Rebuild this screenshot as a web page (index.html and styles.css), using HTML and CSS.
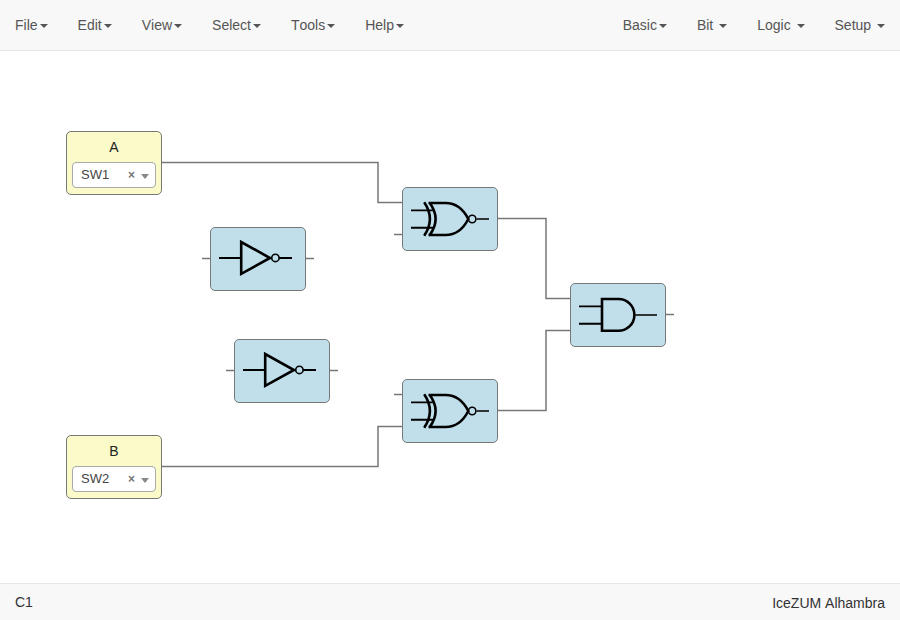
FILE: index.html
```html
<!DOCTYPE html>
<html lang="en">
<head>
<meta charset="utf-8">
<title>C1</title>
<link rel="stylesheet" href="styles.css">
</head>
<body>
<nav class="navbar">
  <ul class="menu">
    <li>File<b class="caret"></b></li>
    <li>Edit<b class="caret"></b></li>
    <li>View<b class="caret"></b></li>
    <li>Select<b class="caret"></b></li>
    <li>Tools<b class="caret"></b></li>
    <li>Help<b class="caret"></b></li>
  </ul>
  <ul class="menu">
    <li>Basic<b class="caret"></b></li>
    <li>Bit <b class="caret"></b></li>
    <li>Logic <b class="caret"></b></li>
    <li>Setup <b class="caret"></b></li>
  </ul>
</nav>

<main class="paper">
  <svg class="wires" viewBox="0 51 900 532">
    <path d="M162 162.5H378V202.5H402"/>
    <path d="M162 466.5H378V426.5H402"/>
    <path d="M498 218.5H546V298.5H570"/>
    <path d="M498 410.5H546V330.5H570"/>
    <path d="M394 234.5H402M394 394.5H402M202 258.5H210M306 258.5H314M226 370.5H234M330 370.5H338M666 314.5H674"/>
  </svg>

  <section class="block io input-a">
    <div class="name">A</div>
    <div class="select"><span class="value">SW1</span><span class="clear">×</span><span class="arrow"></span></div>
  </section>
  <section class="block io input-b">
    <div class="name">B</div>
    <div class="select"><span class="value">SW2</span><span class="clear">×</span><span class="arrow"></span></div>
  </section>

  <svg class="defs">
    <symbol id="xnor" viewBox="0 0 96 64">
      <path class="pin" d="M9 23.4H31M9 40.7H31"/>
      <path class="body" d="M22.2 15.3Q33.6 32 22.2 48.7"/>
      <path class="body" d="M26.5 16H43.5C54 16 61.5 22.5 66.3 32C61.5 41.5 54 48 43.5 48H26.5M27.6 15.8Q39.6 32 27.6 48.2"/>
      <circle class="bubble" cx="70.2" cy="32" r="3.7"/>
      <path class="out" d="M74.5 32H87"/>
    </symbol>
    <symbol id="not" viewBox="0 0 96 64">
      <path class="pin" d="M9 31H31M69 31H82"/>
      <path class="body" d="M31.2 15V46.8L60 31Z"/>
      <circle class="bubble" cx="65.4" cy="30.9" r="3.7"/>
    </symbol>
    <symbol id="and" viewBox="0 0 96 64">
      <path class="pin" d="M9 23.4H31M9 40.7H31"/>
      <path class="body" d="M32 16H48.5A15.9 15.9 0 0 1 48.5 47.8H32Z"/>
      <path class="out" d="M65 32H87"/>
    </symbol>
  </svg>

  <section class="block gate xnor-top"><svg><use href="#xnor"/></svg></section>
  <section class="block gate xnor-bottom"><svg><use href="#xnor"/></svg></section>
  <section class="block gate not-top"><svg><use href="#not"/></svg></section>
  <section class="block gate not-bottom"><svg><use href="#not"/></svg></section>
  <section class="block gate and-out"><svg><use href="#and"/></svg></section>
</main>

<footer class="statusbar">
  <span class="project">C1</span>
  <span class="board">IceZUM Alhambra</span>
</footer>
</body>
</html>
```
FILE: styles.css
```css
* { box-sizing: border-box; }

body {
  margin: 0;
  height: 620px;
  display: flex;
  flex-direction: column;
  overflow: hidden;
  background: #fff;
  color: #333;
  font: 14px/20px "Liberation Sans", Arial, sans-serif;
  font-kerning: none;
}

.navbar {
  height: 51px;
  flex: none;
  display: flex;
  justify-content: space-between;
  background: #f8f8f8;
  border-bottom: 1px solid #e7e7e7;
}

.menu {
  display: flex;
  margin: 0;
  padding: 0;
  list-style: none;
  color: #555;
}

.menu li { padding: 15px; white-space: pre; }

.caret {
  display: inline-block;
  margin-left: 2px;
  vertical-align: middle;
  border-top: 4px solid;
  border-right: 4px solid transparent;
  border-left: 4px solid transparent;
}

.paper { position: relative; flex: 1; }

.wires { display: block; width: 900px; height: 532px; }
.wires path { fill: none; stroke: #777; stroke-width: 1.5; }

.defs { position: absolute; width: 0; height: 0; }

/* Block positions on the design canvas */
.block {
  position: absolute;
  width: 96px;
  height: 64px;
  border: 1px solid #777;
  border-radius: 5px;
}
.input-a { left: 66px; top: 80px; }
.input-b { left: 66px; top: 384px; }
.xnor-top { left: 402px; top: 136px; }
.xnor-bottom { left: 402px; top: 328px; }
.not-top { left: 210px; top: 176px; }
.not-bottom { left: 234px; top: 288px; }
.and-out { left: 570px; top: 232px; }

.gate { background: #c0dfeb; }
.gate svg { display: block; width: 96px; height: 64px; margin: -1px; }
.body, .pin, .bubble, .out { fill: none; stroke: #000; }
.body { stroke-width: 2.6; }
.pin { stroke-width: 1.9; }
.bubble { stroke-width: 1.6; }
.out { stroke: #222; stroke-width: 1.8; }

.io { background: #fbfac9; padding: 5px; }
.name { height: 25px; line-height: 20px; text-align: center; color: #222; }

.select {
  height: 26px;
  display: flex;
  align-items: center;
  padding: 0 6px 0 8px;
  border: 1px solid #aaa;
  border-radius: 4px;
  background: #fff;
  color: #444;
  font-size: 13px;
  line-height: 24px;
}
.value { flex: 1; }
.clear { font-size: 12px; font-weight: bold; color: #777; margin-right: 6px; }
.arrow {
  margin-top: 3px;
  border-top: 5px solid #888;
  border-left: 4px solid transparent;
  border-right: 4px solid transparent;
}

.statusbar {
  height: 37px;
  flex: none;
  display: flex;
  justify-content: space-between;
  padding: 8px 15px;
  background: #f8f8f8;
  border-top: 1px solid #e7e7e7;
}
.board { padding-top: 1px; }
```
